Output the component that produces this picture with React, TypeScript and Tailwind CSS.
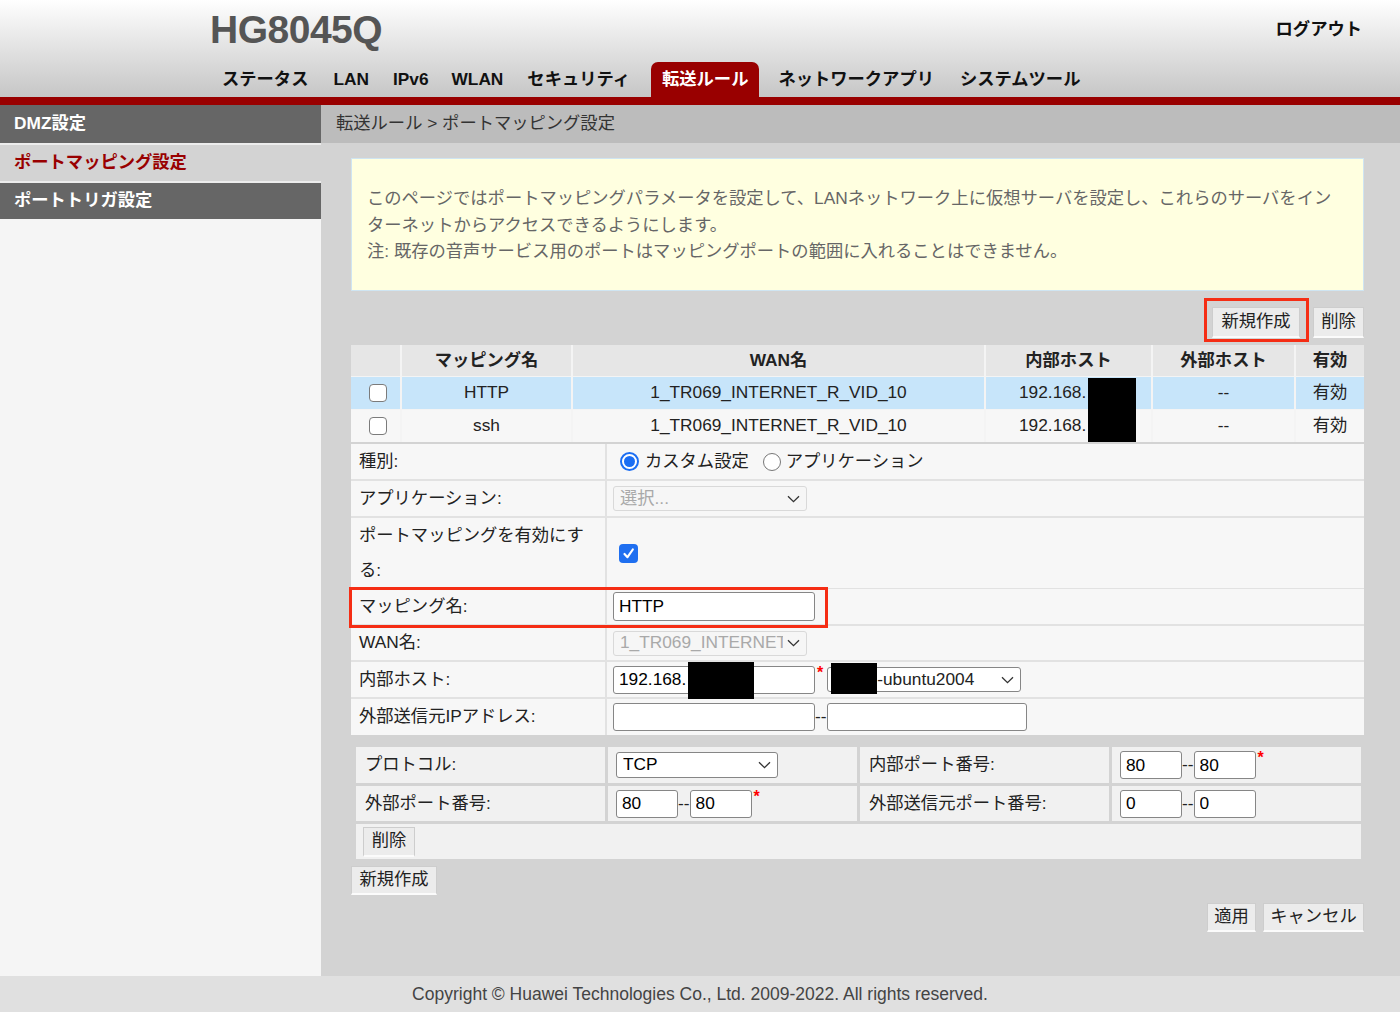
import React from "react";

const FONT = "font-['Liberation_Sans','Noto_Sans_CJK_JP',sans-serif]";

function Chevron() {
  return (
    <svg width="13" height="8" viewBox="0 0 13 8" fill="none" stroke="currentColor" strokeWidth="1.3" className="shrink-0 text-[#333]">
      <path d="M1 1.2l5.5 5.5 5.5-5.5" />
    </svg>
  );
}

function Btn({ children, className = "" }: { children: React.ReactNode; className?: string }) {
  return (
    <button
      type="button"
      className={`whitespace-nowrap text-[17.3px] leading-none text-[#222] bg-[#ececec] border border-[#cdcdcd] border-b-2 border-b-[#fbfbfb] ${className}`}
    >
      {children}
    </button>
  );
}

function Field({ value = "", className = "" }: { value?: string; className?: string }) {
  return (
    <input
      readOnly
      value={value}
      className={`h-[28px] bg-white border border-[#868686] rounded-[3px] px-[5px] text-[17.3px] text-black outline-none ${className}`}
    />
  );
}

function Sel({ text, disabled = false, className = "" }: { text: string; disabled?: boolean; className?: string }) {
  return (
    <div
      className={`flex items-center gap-[4px] rounded-[3px] border pl-[6px] pr-[6px] text-[17.3px] ${
        disabled ? "bg-[#f6f6f6] border-[#d9d9d9] text-[#a9a9a9]" : "bg-white border-[#868686] text-black"
      } ${className}`}
    >
      <span className="flex-1 min-w-0 overflow-hidden whitespace-nowrap">{text}</span>
      <Chevron />
    </div>
  );
}

function Check({ checked = false }: { checked?: boolean }) {
  if (checked) {
    return (
      <span className="w-[19px] h-[19px] rounded-[4px] bg-[#1f6ff0] flex items-center justify-center">
        <svg width="13" height="13" viewBox="0 0 13 13" fill="none" stroke="white" strokeWidth="2.2" strokeLinecap="round" strokeLinejoin="round">
          <path d="M2.5 7l3 3.2L10.8 2.5" />
        </svg>
      </span>
    );
  }
  return <span className="block w-[18px] h-[18px] rounded-[4px] border border-[#7b7b7b] bg-white" />;
}

function Radio({ on = false }: { on?: boolean }) {
  return on ? (
    <span className="w-[19px] h-[19px] rounded-full border-[2px] border-[#1b6ef3] bg-white flex items-center justify-center">
      <span className="block w-[11px] h-[11px] rounded-full bg-[#1b6ef3]" />
    </span>
  ) : (
    <span className="block w-[18px] h-[18px] rounded-full border border-[#777] bg-white" />
  );
}

const Star = () => <span className="self-start mt-[3px] ml-[2px] text-[16px] font-bold leading-none text-[#f00]">*</span>;

const nav = [
  { t: "ステータス", c: "ml-[222px]" },
  { t: "LAN", c: "ml-[25px]" },
  { t: "IPv6", c: "ml-[24px]" },
  { t: "WLAN", c: "ml-[23px]" },
  { t: "セキュリティ", c: "ml-[24px]" },
];

const rows = [
  { name: "HTTP", bg: "bg-[#c7e5fa]" },
  { name: "ssh", bg: "bg-[#f7f7f7]" },
];

export default function App() {
  return (
    <div className={`${FONT} min-h-screen bg-white text-[#222] text-[17.3px]`}>
      <header className="h-[97px] flex flex-col bg-linear-to-b from-white to-[#c6c6c6]">
        <div className="h-[62px] flex justify-between">
          <div className="pl-[210px] pt-[10px] text-[39px] leading-none font-bold text-[#555] tracking-[-0.5px]">HG8045Q</div>
          <div className="pr-[38px] pt-[17px] font-bold text-[#111]">ログアウト</div>
        </div>
        <nav className="h-[35px] flex items-stretch font-bold text-[#111]">
          {nav.map((n) => (
            <span key={n.t} className={`flex items-center ${n.c}`}>{n.t}</span>
          ))}
          <span className="ml-[21px] flex items-center px-[11px] rounded-t-[7px] bg-[#990000] text-white">転送ルール</span>
          <span className="ml-[19px] flex items-center">ネットワークアプリ</span>
          <span className="ml-[26px] flex items-center">システムツール</span>
        </nav>
      </header>
      <div className="h-[8px] bg-[#990000]" />

      <div className="flex h-[871px]">
        <aside className="w-[321px] bg-[#f5f5f5] font-bold">
          <div className="h-[38px] bg-[#666] text-white pl-[14px] flex items-center">DMZ設定</div>
          <div className="h-[2px] bg-[#ececec]" />
          <div className="h-[36px] bg-[#d3d3d3] text-[#990000] pl-[14px] flex items-center">ポートマッピング設定</div>
          <div className="h-[2px] bg-[#ececec]" />
          <div className="h-[36px] bg-[#666] text-white pl-[14px] flex items-center">ポートトリガ設定</div>
        </aside>

        <main className="flex-1 bg-[#d3d3d3]">
          <div className="h-[38px] bg-[#bcbcbc] pl-[15px] flex items-center text-[#333]">転送ルール &gt; ポートマッピング設定</div>

          <div className="pl-[30px] pr-[36px] pt-[15px]">
            <div className="h-[133px] border border-[#cfe5f2] bg-[#ffffe0] pl-[15px] pt-[26px] text-[#666] leading-[26.5px] whitespace-nowrap">
              <div>このページではポートマッピングパラメータを設定して、LANネットワーク上に仮想サーバを設定し、これらのサーバをイン</div>
              <div>ターネットからアクセスできるようにします。</div>
              <div>注: 既存の音声サービス用のポートはマッピングポートの範囲に入れることはできません。</div>
            </div>

            <div className="mt-[16px] flex justify-end gap-[13px]">
              <div className="relative">
                <Btn className="h-[31px] w-[88px]">新規作成</Btn>
                <div className="absolute left-[-8px] top-[-9px] w-[105px] h-[44px] border-[3px] border-[#f52d14] pointer-events-none" />
              </div>
              <Btn className="h-[31px] w-[51px]">削除</Btn>
            </div>

            <div className="relative mt-[7px] grid grid-cols-[49px_169px_411px_165px_141px_68px] gap-x-[2px] gap-y-[1px] bg-[#f4f4f4]">
              <div className="h-[31px] bg-[#e6e6e6]" />
              {["マッピング名", "WAN名", "内部ホスト", "外部ホスト", "有効"].map((h) => (
                <div key={h} className="h-[31px] bg-[#e6e6e6] font-bold flex items-center justify-center">{h}</div>
              ))}
              {rows.map((r) => (
                <React.Fragment key={r.name}>
                  <div className={`h-[32px] ${r.bg} pl-[18px] flex items-center`}><Check /></div>
                  <div className={`h-[32px] ${r.bg} flex items-center justify-center`}>{r.name}</div>
                  <div className={`h-[32px] ${r.bg} flex items-center justify-center`}>1_TR069_INTERNET_R_VID_10</div>
                  <div className={`h-[32px] ${r.bg} flex items-center pl-[33px]`}>192.168.</div>
                  <div className={`h-[32px] ${r.bg} flex items-center justify-center`}>--</div>
                  <div className={`h-[32px] ${r.bg} flex items-center justify-center`}>有効</div>
                </React.Fragment>
              ))}
              <div className="absolute left-[737px] top-[33px] w-[48px] h-[64px] bg-black" />
            </div>

            <div className="mt-[2px] flex flex-col gap-[2px] bg-[#e2e2e2]">
              <div className="grid grid-cols-[254px_1fr] gap-x-[2px] h-[35px]">
                <div className="bg-[#f7f7f7] pl-[8px] flex items-center">種別:</div>
                <div className="bg-[#f7f7f7] flex items-center">
                  <span className="ml-[13px]"><Radio on /></span>
                  <span className="ml-[6px]">カスタム設定</span>
                  <span className="ml-[14px]"><Radio /></span>
                  <span className="ml-[5px]">アプリケーション</span>
                </div>
              </div>
              <div className="grid grid-cols-[254px_1fr] gap-x-[2px] h-[35px]">
                <div className="bg-[#f7f7f7] pl-[8px] flex items-center">アプリケーション:</div>
                <div className="bg-[#f7f7f7] flex items-center pl-[6px]">
                  <Sel text="選択..." disabled className="w-[194px] h-[25px]" />
                </div>
              </div>
              <div className="grid grid-cols-[254px_1fr] gap-x-[2px] h-[69px]">
                <div className="bg-[#f7f7f7] pl-[8px] flex flex-col justify-center leading-[35px]">
                  <span>ポートマッピングを有効にす</span>
                  <span>る:</span>
                </div>
                <div className="bg-[#f7f7f7] flex items-center pl-[12px]"><Check checked /></div>
              </div>
              <div className="relative grid grid-cols-[254px_1fr] gap-x-[2px] h-[35px]">
                <div className="bg-[#f7f7f7] pl-[8px] flex items-center">マッピング名:</div>
                <div className="bg-[#f7f7f7] flex items-center pl-[6px]">
                  <Field value="HTTP" className="w-[202px] h-[29px]" />
                </div>
                <div className="absolute left-[-2px] top-[-2px] w-[479px] h-[41px] border-[3px] border-[#f52d14] pointer-events-none" />
              </div>
              <div className="grid grid-cols-[254px_1fr] gap-x-[2px] h-[34px]">
                <div className="bg-[#f7f7f7] pl-[8px] flex items-center">WAN名:</div>
                <div className="bg-[#f7f7f7] flex items-center pl-[6px]">
                  <Sel text="1_TR069_INTERNET_R_VID_10" disabled className="w-[194px] h-[25px]" />
                </div>
              </div>
              <div className="grid grid-cols-[254px_1fr] gap-x-[2px] h-[35px]">
                <div className="bg-[#f7f7f7] pl-[8px] flex items-center">内部ホスト:</div>
                <div className="bg-[#f7f7f7] flex items-center pl-[6px]">
                  <div className="relative">
                    <Field value="192.168." className="w-[202px]" />
                    <div className="absolute left-[75px] top-[-4px] w-[66px] h-[37px] bg-black" />
                  </div>
                  <Star />
                  <div className="relative ml-[4px]">
                    <Sel text="" className="w-[194px] h-[25px]" />
                    <span className="absolute left-[50px] top-0 h-[25px] flex items-center">-ubuntu2004</span>
                    <div className="absolute left-[4px] top-[-4px] w-[46px] h-[31px] bg-black" />
                  </div>
                </div>
              </div>
              <div className="grid grid-cols-[254px_1fr] gap-x-[2px] h-[36px]">
                <div className="bg-[#f7f7f7] pl-[8px] flex items-center">外部送信元IPアドレス:</div>
                <div className="bg-[#f7f7f7] flex items-center pl-[6px]">
                  <Field className="w-[202px]" />
                  <span>--</span>
                  <Field className="w-[200px]" />
                </div>
              </div>
            </div>

            <div className="mt-[12px] ml-[5px] mr-[3px] grid grid-cols-[249px_249px_249px_249px] gap-x-[3px] gap-y-[3px]">
              <div className="h-[36px] bg-[#f1f1f1] pl-[9px] flex items-center">プロトコル:</div>
              <div className="h-[36px] bg-[#f1f1f1] pl-[8px] flex items-center">
                <Sel text="TCP" className="w-[162px] h-[26px]" />
              </div>
              <div className="h-[36px] bg-[#f1f1f1] pl-[9px] flex items-center">内部ポート番号:</div>
              <div className="h-[36px] bg-[#f1f1f1] pl-[8px] flex items-center">
                <Field value="80" className="w-[62px]" />
                <span>--</span>
                <Field value="80" className="w-[62px]" />
                <Star />
              </div>

              <div className="h-[35px] bg-[#f1f1f1] pl-[9px] flex items-center">外部ポート番号:</div>
              <div className="h-[35px] bg-[#f1f1f1] pl-[8px] flex items-center">
                <Field value="80" className="w-[62px]" />
                <span>--</span>
                <Field value="80" className="w-[62px]" />
                <Star />
              </div>
              <div className="h-[35px] bg-[#f1f1f1] pl-[9px] flex items-center">外部送信元ポート番号:</div>
              <div className="h-[35px] bg-[#f1f1f1] pl-[8px] flex items-center">
                <Field value="0" className="w-[62px]" />
                <span>--</span>
                <Field value="0" className="w-[62px]" />
              </div>

              <div className="col-span-4 h-[35px] bg-[#f1f1f1] pl-[7px] flex items-center">
                <Btn className="h-[30px] w-[52px]">削除</Btn>
              </div>
            </div>

            <div className="mt-[7px]">
              <Btn className="h-[29px] w-[86px]">新規作成</Btn>
            </div>

            <div className="mt-[8px] flex justify-end gap-[7px]">
              <Btn className="h-[29px] w-[49px]">適用</Btn>
              <Btn className="h-[29px] w-[101px]">キャンセル</Btn>
            </div>
          </div>
        </main>
      </div>

      <footer className="h-[36px] bg-[#e0e0e0] flex items-center justify-center text-[#444] text-[17.5px]">
        Copyright © Huawei Technologies Co., Ltd. 2009-2022. All rights reserved.
      </footer>
    </div>
  );
}
